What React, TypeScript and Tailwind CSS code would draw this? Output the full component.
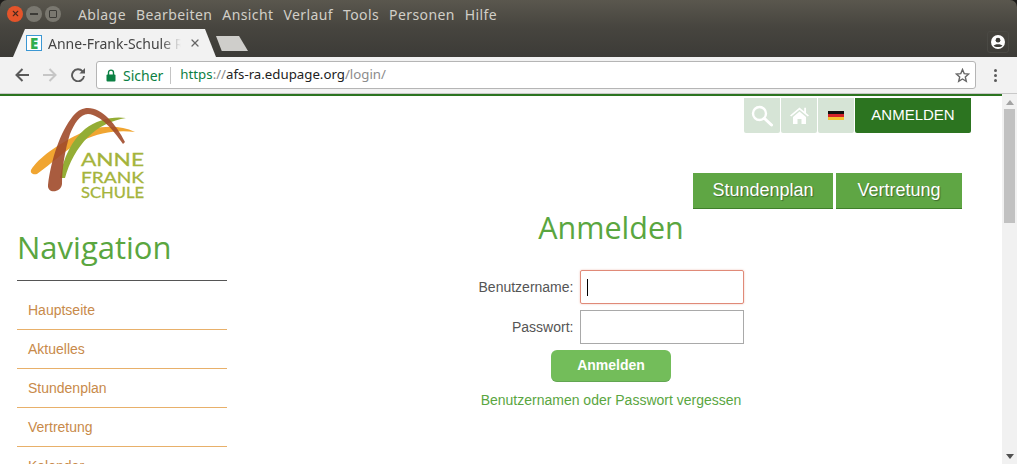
import { X } from 'lucide-react';

const menuItems = ['Ablage', 'Bearbeiten', 'Ansicht', 'Verlauf', 'Tools', 'Personen', 'Hilfe'];
const navItems = ['Hauptseite', 'Aktuelles', 'Stundenplan', 'Vertretung', 'Kalender'];

// viewBox uses page coordinates so the swooshes are easy to compare with the screenshot
const Logo = () => (
  <div className="ml-[8px] h-[100px] w-[125px]">
    <svg width="125" height="100" viewBox="25 105 125 100">
      <path d="M31 170 C38 158 60 143 77 135 C92 127 116 123 135 132 C118 130 100 132 82 141 C66 149 50 165 37 174 C33 175 30 173 31 170 Z" fill="#f0a531" />
      <path d="M60 178 C63 158 72 140 85 129 C97 120 112 116 126 118 C112 120 98 127 88 137 C77 148 69 163 65 178 Z" fill="#94ad35" />
      <path d="M48 185 C51 160 60 132 73 116 C78 110 83 108 88 108 C102 108 116 124 125 142 L123 144 C113 130 101 115 88 114 C80 114 74 124 70 134 C65 150 62 168 62 184 C61 193 47 194 48 185 Z" fill="#a04a2a" fillOpacity="0.9" />
      <g fill="#a5b43c" stroke="#a5b43c" strokeWidth="0.3" fontFamily="Lato, sans-serif" fontWeight="400">
        <text x="81" y="166" fontSize="18" textLength="63" lengthAdjust="spacingAndGlyphs">ANNE</text>
        <text x="81" y="183" fontSize="16" textLength="63" lengthAdjust="spacingAndGlyphs">FRANK</text>
        <text x="81" y="198" fontSize="15" textLength="63" lengthAdjust="spacingAndGlyphs">SCHULE</text>
      </g>
    </svg>
  </div>
);

const SearchIcon = () => (
  <svg width="22" height="22" viewBox="0 0 22 22" fill="none" stroke="white" strokeWidth="2.4">
    <circle cx="8.5" cy="8.5" r="6.5" />
    <path d="M13.5 13.5 L20.5 20" strokeLinecap="round" strokeWidth="3" />
  </svg>
);

const HomeIcon = () => (
  <svg width="19" height="17" viewBox="0 0 19 17" fill="white">
    <path d="M9.5 0.5 L0 8.5 L1.2 9.6 L9.5 2.8 L17.8 9.6 L19 8.5 L16 5.9 V0.8 H14.2 V4.4 Z" />
    <path d="M3 10 L9.5 4.6 L16 10 V17 H11.5 V12 H7.5 V17 H3 Z" />
  </svg>
);

const BackIcon = () => (
  <svg width="14" height="14" viewBox="0 0 14 14" fill="none" stroke="#5a5a5a" strokeWidth="2">
    <path d="M14 7 H2 M7.5 1 L1.5 7 L7.5 13" />
  </svg>
);

const ForwardIcon = () => (
  <svg width="14" height="14" viewBox="0 0 14 14" fill="none" stroke="#c6c6c6" strokeWidth="2">
    <path d="M0 7 H12 M6.5 1 L12.5 7 L6.5 13" />
  </svg>
);

const ReloadIcon = () => (
  <svg width="14" height="14" viewBox="0 0 14 14" fill="none">
    <path d="M11.6 3.4 A6 6 0 1 0 13 8" stroke="#5a5a5a" strokeWidth="1.9" />
    <path d="M8.4 5.6 H14 V0 Z" fill="#5a5a5a" />
  </svg>
);

const LockIcon = () => (
  <svg width="10" height="13" viewBox="0 0 10 13">
    <path d="M2.5 6 V3.6 A2.5 2.5 0 0 1 7.5 3.6 V6" fill="none" stroke="#0b8043" strokeWidth="1.4" />
    <rect x="0.5" y="5.5" width="9" height="7" rx="1" fill="#0b8043" />
  </svg>
);

const StarIcon = () => (
  <svg width="15" height="15" viewBox="0 0 15 15" fill="none" stroke="#666" strokeWidth="1.4">
    <path d="M7.5 1.5 L9.2 5.6 L13.7 6 L10.3 8.9 L11.3 13.3 L7.5 11 L3.7 13.3 L4.7 8.9 L1.3 6 L5.8 5.6 Z" />
  </svg>
);

const BrowserChrome = () => (
  <header className="bg-[#1d1c1a] font-['Noto_Sans',sans-serif]">
    <div className="flex h-[27px] items-center rounded-t-[7px] bg-gradient-to-b from-[#5a574e] to-[#47453f]">
      <div className="ml-[7px] flex items-center gap-[3px]">
        <span className="flex h-[16px] w-[16px] items-center justify-center rounded-full bg-[#e4542a]">
          <X size={9} strokeWidth={3} className="text-[#4a2a1e]" />
        </span>
        <span className="flex h-[16px] w-[16px] items-center justify-center rounded-full bg-[#7a7870]">
          <span className="h-[2px] w-[8px] bg-[#3c3b37]" />
        </span>
        <span className="flex h-[16px] w-[16px] items-center justify-center rounded-full bg-[#7a7870]">
          <span className="h-[8px] w-[8px] rounded-[1px] border border-[#3c3b37]" />
        </span>
      </div>
      <nav className="mt-[1px] ml-[17px] flex gap-[10px] text-[14px] tracking-[0.4px] text-[#d2cfc8]">
        {menuItems.map((item) => (
          <span key={item}>{item}</span>
        ))}
      </nav>
    </div>
    <div className="flex h-[30px] items-end bg-gradient-to-b from-[#47453f] to-[#3c3b37]">
      <div className="ml-[13px] flex h-[28px] w-[203px] items-center bg-[#f2f2f2] pl-[13px] [clip-path:polygon(0_100%,12px_0,192px_0,100%_100%)]">
        <span className="flex h-[16px] w-[16px] items-center justify-center border-[1.5px] border-[#3b97d3] bg-white text-[15px] leading-none font-black text-[#2fae4e]">
          E
        </span>
        <span className="ml-[6px] w-[133px] overflow-hidden text-[14px] whitespace-nowrap text-[#444] [mask-image:linear-gradient(to_right,black_85%,transparent)]">
          Anne-Frank-Schule Ravensburg
        </span>
        <X size={12} strokeWidth={2.5} className="ml-[8px] text-[#666]" />
      </div>
      <div className="mb-[6px] h-[15px] w-[32px] bg-[#cfcecb] [clip-path:polygon(0_0,72%_0,100%_100%,18%_100%)]" />
      <div className="mr-[8px] mb-[4px] ml-auto flex h-[22px] w-[22px] items-center justify-center rounded-[3px] border border-[#4a4944]">
        <svg width="14" height="14" viewBox="0 0 14 14">
          <circle cx="7" cy="7" r="7" fill="white" />
          <circle cx="7" cy="5.2" r="2.4" fill="#3c3b37" />
          <path d="M2.5 10.7 C3.5 8.6 10.5 8.6 11.5 10.7 C10 12.4 4 12.4 2.5 10.7 Z" fill="#3c3b37" />
        </svg>
      </div>
    </div>
    <div className="flex h-[37px] items-center border-b border-[#c8c8c8] bg-[#f2f2f2]">
      <span className="ml-[15px]"><BackIcon /></span>
      <span className="ml-[14px]"><ForwardIcon /></span>
      <span className="ml-[14px]"><ReloadIcon /></span>
      <div className="ml-[11px] flex h-[28px] w-[880px] items-center rounded-[3px] border border-[#b5b5b5] bg-white text-[14px]">
        <span className="ml-[9px] flex"><LockIcon /></span>
        <span className="ml-[7px] text-[#0b8043]">Sicher</span>
        <span className="ml-[7px] h-[17px] w-px bg-[#c4c4c4]" />
        <span className="ml-[9px] text-[13.25px] text-[#0b8043]">https</span>
        <span className="text-[13.25px] text-[#8c8c8c]">://</span>
        <span className="text-[13.25px] text-[#222]">afs-ra.edupage.org</span>
        <span className="text-[13.25px] text-[#8c8c8c]">/login/</span>
        <span className="mr-[5px] ml-auto flex"><StarIcon /></span>
      </div>
      <div className="ml-[18px] flex flex-col gap-[2px]">
        <span className="h-[3px] w-[3px] rounded-full bg-[#5a5a5a]" />
        <span className="h-[3px] w-[3px] rounded-full bg-[#5a5a5a]" />
        <span className="h-[3px] w-[3px] rounded-full bg-[#5a5a5a]" />
      </div>
    </div>
  </header>
);

const Sidebar = () => (
  <aside className="w-[227px] shrink-0 pt-[9px] pl-[17px]">
    <Logo />
    <h2 className="mt-[20px] font-['Open_Sans',sans-serif] text-[31px] leading-[44px] text-[#5aa63f]">Navigation</h2>
    <ul className="mt-[11px] border-t border-[#555] pt-[10px] font-['Liberation_Sans',sans-serif] text-[14px] text-[#c88a4a]">
      {navItems.map((item) => (
        <li key={item} className="h-[39px] border-b border-[#e8b06a] pl-[11px] leading-[39px]">
          {item}
        </li>
      ))}
    </ul>
  </aside>
);

const MainContent = () => (
  <main className="w-[768px] shrink-0 font-['Liberation_Sans',sans-serif]">
    <div className="mt-[2px] mr-[24px] flex justify-end gap-px">
      <span className="flex h-[35px] w-[36px] items-center justify-center rounded-b-[2px] bg-[#d6e4d6]">
        <SearchIcon />
      </span>
      <span className="flex h-[35px] w-[36px] items-center justify-center rounded-b-[2px] bg-[#d6e4d6]">
        <HomeIcon />
      </span>
      <span className="flex h-[35px] w-[36px] items-center justify-center rounded-b-[2px] bg-[#d6e4d6]">
        <span className="flex h-[10px] w-[16px] flex-col overflow-hidden">
          <span className="h-1/3 bg-[#111]" />
          <span className="h-1/3 bg-[#d3232a]" />
          <span className="h-1/3 bg-[#f2c230]" />
        </span>
      </span>
      <span className="flex h-[35px] w-[116px] items-center justify-center rounded-b-[2px] bg-[#2c7420] text-[15px] text-white">ANMELDEN</span>
    </div>
    <div className="mt-[40px] ml-[466px] flex gap-[3px] text-[18px] text-white [text-shadow:1px_1px_1px_rgba(0,0,0,0.35)]">
      <span className="flex h-[36px] w-[140px] items-center justify-center border-b border-[#3f7f2a] bg-[#5fa644]">Stundenplan</span>
      <span className="flex h-[36px] w-[126px] items-center justify-center border-b border-[#3f7f2a] bg-[#5fa644]">Vertretung</span>
    </div>
    <h1 className="text-center font-['Open_Sans',sans-serif] text-[30.5px] leading-[36px] text-[#5aa63f]">Anmelden</h1>
    <form className="mt-[25px] flex flex-col items-center">
      <div className="ml-[1px] flex flex-col gap-[6px] text-[14px] text-[#555]">
        <label className="flex items-center justify-end gap-[7px]">
          Benutzername:
          <span className="flex h-[34px] w-[164px] items-center rounded-[2px] border border-[#e08a78] pl-[6px] shadow-[0_0_2px_rgba(224,138,120,0.6)]">
            <span className="h-[17px] w-px bg-black" />
          </span>
        </label>
        <label className="flex items-center justify-end gap-[7px]">
          Passwort:
          <span className="h-[34px] w-[164px] border border-[#a9a9a9]" />
        </label>
      </div>
      <button type="button" className="mt-[6px] h-[32px] w-[120px] rounded-[6px] border-b border-[#62a652] bg-[#73bd5a] text-[14px] font-bold text-white">
        Anmelden
      </button>
      <a className="mt-[8px] text-[14px] text-[#5aa63f]">Benutzernamen oder Passwort vergessen</a>
    </form>
  </main>
);

const Scrollbar = () => (
  <div className="flex w-[15px] shrink-0 flex-col items-center bg-[#f1f1f1] pb-[5px]">
    <span className="mt-[6px] h-0 w-0 border-x-[4px] border-b-[5px] border-x-transparent border-b-[#a3a3a3]" />
    <span className="mt-[4px] h-[114px] w-[11px] bg-[#c1c1c1]" />
    <span className="mt-auto h-0 w-0 border-x-[4px] border-t-[5px] border-x-transparent border-t-[#505050]" />
  </div>
);

export default function App() {
  return (
    <div className="flex h-[464px] w-[1017px] flex-col overflow-hidden bg-white">
      <BrowserChrome />
      <div className="flex min-h-0 flex-1">
        <div className="min-w-0 flex-1">
          <div className="h-[2px] bg-[#2c7420]" />
          <div className="flex">
            <Sidebar />
            <MainContent />
          </div>
        </div>
        <Scrollbar />
      </div>
    </div>
  );
}
